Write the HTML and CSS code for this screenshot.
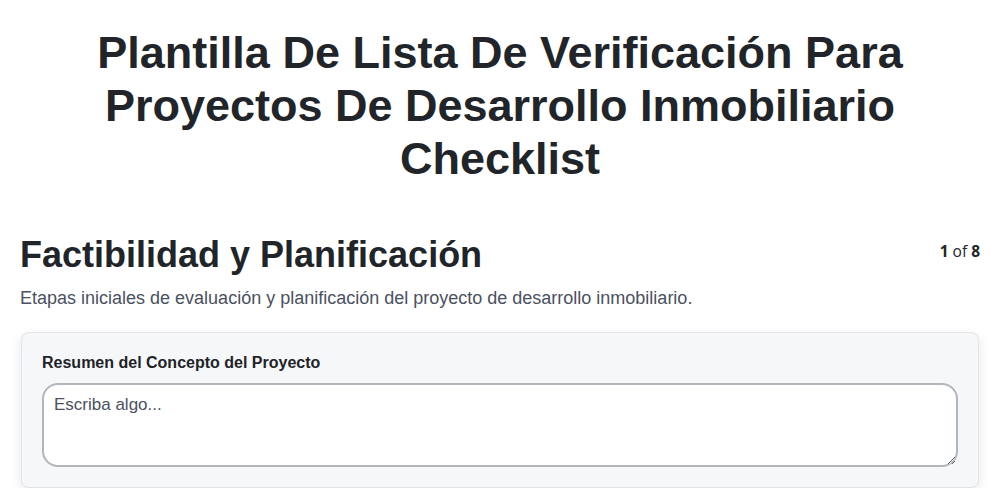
FILE: index.html
```html
<!DOCTYPE html>
<html lang="es">
<head>
<meta charset="utf-8">
<title>Checklist</title>
<link rel="stylesheet" href="styles.css">
</head>
<body>
<main class="page">
  <h1 class="title">Plantilla De Lista De Verificación Para Proyectos De Desarrollo Inmobiliario Checklist</h1>
  <section class="section">
    <div class="section-head">
      <h2 class="section-title">Factibilidad y Planificación</h2>
      <div class="counter"><b>1</b> of <b>8</b></div>
    </div>
    <p class="section-desc">Etapas iniciales de evaluación y planificación del proyecto de desarrollo inmobiliario.</p>
    <div class="card">
      <label class="field-label" for="f1">Resumen del Concepto del Proyecto</label>
      <textarea id="f1" class="field-input" placeholder="Escriba algo..."></textarea>
    </div>
  </section>
</main>
</body>
</html>
```

FILE: styles.css
```css
* { box-sizing: border-box; }
html, body { margin: 0; padding: 0; background: #fff; }
body {
  font-family: "Liberation Sans", Arial, sans-serif;
  color: #1f2328;
}
.page { padding: 26px 20px 0; }
.title {
  margin: 0 auto;
  max-width: 880px;
  text-align: center;
  font-size: 45px;
  line-height: 53px;
  font-weight: 700;
  color: #212529;
}
.section { margin-top: 48px; }
.section-head {
  display: flex;
  justify-content: space-between;
  align-items: flex-start;
}
.section-title {
  margin: 0;
  font-size: 36px;
  line-height: 44px;
  font-weight: 700;
  color: #212529;
}
.counter {
  font-family: "Open Sans", sans-serif;
  font-size: 15.5px;
  line-height: 20px;
  padding-top: 8px;
  color: #212529;
}
.counter b { font-weight: 700; }
.section-desc {
  margin: 8px 0 0;
  font-size: 18px;
  line-height: 26px;
  color: #4a5160;
}
.card {
  margin: 21px 1px 0;
  background: #f6f7f9;
  border: 1px solid #e3e5e8;
  border-radius: 8px;
  box-shadow: 0 4px 12px rgba(0,0,0,0.10);
  padding: 20px 20px 20px;
}
.field-label {
  display: block;
  font-size: 16px;
  line-height: 20px;
  font-weight: 700;
  color: #1f2328;
  margin-bottom: 10px;
}
.field-input {
  display: block;
  width: 100%;
  height: 84px;
  border: 2px solid #b1b6bc;
  border-radius: 16px;
  background: #fff;
  padding: 10px 10px;
  font-family: "Liberation Sans", Arial, sans-serif;
  font-size: 17px;
  line-height: 20px;
  color: #1f2328;
  resize: vertical;
}
.field-input::placeholder { color: #4a5160; opacity: 1; }
```
